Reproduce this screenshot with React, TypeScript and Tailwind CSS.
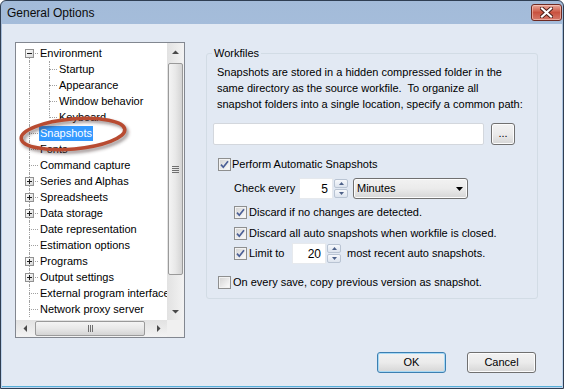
import React from "react";

type Item = { label: string; level: 0 | 1; exp?: "+" | "-"; selected?: boolean; last?: boolean };

const items: Item[] = [
  { label: "Environment", level: 0, exp: "-" },
  { label: "Startup", level: 1 },
  { label: "Appearance", level: 1 },
  { label: "Window behavior", level: 1 },
  { label: "Keyboard", level: 1, last: true },
  { label: "Snapshots", level: 0, selected: true },
  { label: "Fonts", level: 0 },
  { label: "Command capture", level: 0 },
  { label: "Series and Alphas", level: 0, exp: "+" },
  { label: "Spreadsheets", level: 0, exp: "+" },
  { label: "Data storage", level: 0, exp: "+" },
  { label: "Date representation", level: 0 },
  { label: "Estimation options", level: 0 },
  { label: "Programs", level: 0, exp: "+" },
  { label: "Output settings", level: 0, exp: "+" },
  { label: "External program interface", level: 0 },
  { label: "Network proxy server", level: 0 },
];

function Expander({ sign }: { sign: "+" | "-" }) {
  return (
    <span className="absolute left-[3px] top-[4px] flex h-[9px] w-[9px] items-center justify-center border border-[#919191] bg-gradient-to-br from-white to-[#d8d8d8]">
      <svg width="7" height="7" viewBox="0 0 7 7">
        <rect x="1" y="3" width="5" height="1" fill="#1e1e1e" />
        {sign === "+" && <rect x="3" y="1" width="1" height="5" fill="#1e1e1e" />}
      </svg>
    </span>
  );
}

function TreeRow({ item, first }: { item: Item; first: boolean }) {
  return (
    <div className="flex h-[16px] shrink-0 items-center whitespace-nowrap">
      <div className="relative h-full w-[16px] shrink-0">
        <span
          className={`absolute left-[7px] ${first ? "top-[8px]" : "top-0"} bottom-0 border-l border-dotted border-[#a0a0a0]`}
        />
        {item.level === 0 && (
          <span className="absolute left-[7px] right-0 top-[8px] border-t border-dotted border-[#a0a0a0]" />
        )}
        {item.exp && <Expander sign={item.exp} />}
      </div>
      {item.level === 1 && (
        <div className="relative h-full w-[19px] shrink-0">
          <span
            className={`absolute left-[11px] top-0 ${item.last ? "h-[9px]" : "bottom-0"} border-l border-dotted border-[#a0a0a0]`}
          />
          <span className="absolute left-[11px] right-0 top-[8px] border-t border-dotted border-[#a0a0a0]" />
        </div>
      )}
      <span
        className={`ml-[1px] flex h-[15px] items-center px-[1px] ${item.selected ? "bg-[#3399ff] text-white" : "text-black"}`}
      >
        {item.label}
      </span>
    </div>
  );
}

function Tri({ dir }: { dir: "up" | "down" | "left" | "right" }) {
  const pts: Record<string, string> = {
    up: "0,4 3.5,0.5 7,4",
    down: "0,0 3.5,3.5 7,0",
    left: "4,0 0.5,3.5 4,7",
    right: "0,0 3.5,3.5 0,7",
  };
  const vertical = dir === "up" || dir === "down";
  return (
    <svg width={vertical ? 7 : 4} height={vertical ? 4 : 7} viewBox={vertical ? "0 0 7 4" : "0 0 4 7"}>
      <polygon points={pts[dir]} fill="#4a4a4a" />
    </svg>
  );
}

function VScroll() {
  return (
    <div className="flex w-[17px] shrink-0 flex-col bg-gradient-to-r from-[#e2e2e2] to-[#f3f3f3]">
      <div className="flex h-[17px] shrink-0 items-center justify-center">
        <Tri dir="up" />
      </div>
      <div className="flex flex-1 flex-col px-[1px]">
        <div className="mt-[3px] flex h-[212px] items-center justify-center rounded-[2px] border border-[#9a9a9a] bg-gradient-to-r from-[#f4f4f4] via-[#e8e8e8] to-[#d4d4d4]">
          <div className="flex flex-col gap-[1px]">
            <span className="h-[1px] w-[7px] bg-[#6f6f6f]" />
            <span className="h-[1px] w-[7px] bg-[#6f6f6f]" />
            <span className="h-[1px] w-[7px] bg-[#6f6f6f]" />
            <span className="h-[1px] w-[7px] bg-[#6f6f6f]" />
          </div>
        </div>
      </div>
      <div className="flex h-[17px] shrink-0 items-center justify-center">
        <Tri dir="down" />
      </div>
    </div>
  );
}

function HScroll() {
  return (
    <div className="flex h-[17px] shrink-0">
      <div className="flex flex-1 bg-gradient-to-b from-[#e2e2e2] to-[#f3f3f3]">
        <div className="flex w-[17px] shrink-0 items-center justify-center">
          <Tri dir="left" />
        </div>
        <div className="flex flex-1 py-[1px]">
          <div className="ml-[2px] flex w-[110px] items-center justify-center rounded-[2px] border border-[#9a9a9a] bg-gradient-to-b from-[#f4f4f4] via-[#e8e8e8] to-[#d4d4d4]">
            <div className="flex gap-[1px]">
              <span className="h-[7px] w-[1px] bg-[#6f6f6f]" />
              <span className="h-[7px] w-[1px] bg-[#6f6f6f]" />
              <span className="h-[7px] w-[1px] bg-[#6f6f6f]" />
            </div>
          </div>
        </div>
        <div className="flex w-[17px] shrink-0 items-center justify-center">
          <Tri dir="right" />
        </div>
      </div>
      <div className="w-[17px] shrink-0 bg-[#f0f0f0]" />
    </div>
  );
}

function Check({ checked }: { checked: boolean }) {
  return (
    <span className="flex h-[13px] w-[13px] shrink-0 items-center justify-center border border-[#8e8f8f] bg-white">
      <span className="flex h-[11px] w-[11px] items-center justify-center border border-[#f2f2f2] bg-gradient-to-br from-[#d6d6d6] to-[#fafafa]">
        {checked && (
          <svg width="9" height="9" viewBox="0 0 9 9">
            <path d="M1 4.6 L3.3 7.2 L8 1.2" fill="none" stroke="#4b5f96" strokeWidth="1.7" />
          </svg>
        )}
      </span>
    </span>
  );
}

function SpinBtn({ dir }: { dir: "up" | "down" }) {
  return (
    <div className="flex flex-1 items-center justify-center rounded-[2px] border border-[#b9c4d3] bg-gradient-to-b from-[#f7f9fc] to-[#dde4ee]">
      <svg width="5" height="3" viewBox="0 0 5 3">
        <polygon points={dir === "up" ? "0,3 2.5,0 5,3" : "0,0 2.5,3 5,0"} fill="#4d6189" />
      </svg>
    </div>
  );
}

function Spinner({ value }: { value: string }) {
  return (
    <div className="flex h-[21px] items-stretch">
      <div className="flex w-[34px] items-center justify-end border border-[#e6e9ed] bg-white pr-[4px] text-[12px]">
        {value}
      </div>
      <div className="ml-[1px] flex w-[14px] flex-col gap-[1px] py-[1px]">
        <SpinBtn dir="up" />
        <SpinBtn dir="down" />
      </div>
    </div>
  );
}

function Button({ children, focused, className }: { children: React.ReactNode; focused?: boolean; className?: string }) {
  return (
    <div
      className={`flex items-center justify-center rounded-[3px] border ${
        focused ? "border-[#3c7fb1] shadow-[inset_0_0_0_1px_#a7d9f5]" : "border-[#707070] shadow-[inset_0_0_0_1px_#fcfcfc]"
      } bg-gradient-to-b from-[#f2f2f2] via-[#ebebeb] to-[#d6d6d6] ${className ?? ""}`}
    >
      {children}
    </div>
  );
}

function CloseBtn() {
  return (
    <div className="mt-[3px] flex h-[17px] w-[31px] items-center justify-center self-start rounded-[3px] border border-[#6e2a22] bg-gradient-to-b from-[#e8a89b] via-[#c9523f] to-[#d5786a] shadow-[inset_0_0_0_1px_rgba(255,220,210,0.5)]">
      <svg width="13" height="11" viewBox="0 0 13 11">
        <path d="M2 1.5 L11 9.5 M11 1.5 L2 9.5" stroke="#4a1d17" strokeWidth="4" strokeLinecap="square" />
        <path d="M2 1.5 L11 9.5 M11 1.5 L2 9.5" stroke="#ffffff" strokeWidth="2.2" strokeLinecap="square" />
      </svg>
    </div>
  );
}

export default function App() {
  return (
    <div className="h-[389px] w-[566px] bg-white font-['Liberation_Sans',Arial,sans-serif] text-[11px] text-black">
      <div className="flex h-[389px] w-[564px] flex-col rounded-t-[6px] border border-[#2f3e52] bg-gradient-to-b from-[#a3bbd9] to-[#bfd5ee]">
        <div className="flex h-[23px] shrink-0 items-center justify-between pl-[6px] pr-[1px]">
          <span className="mt-[1px] text-[12px] text-[#0b0b0b]">General Options</span>
          <CloseBtn />
        </div>
        <div className="mx-[1px] mb-[1px] flex flex-1 flex-col border-b border-[#55aed8] bg-[#e2e9f3] pl-[13px] pt-[18px]">
          <div className="flex items-start">
            <div className="relative flex h-[296px] w-[170px] shrink-0 flex-col border border-[#828790] bg-white">
              <div className="flex flex-1 overflow-hidden">
                <div className="flex flex-1 flex-col overflow-hidden pl-[6px] pt-[2px]">
                  {items.map((it, i) => (
                    <TreeRow key={it.label} item={it} first={i === 0} />
                  ))}
                </div>
                <VScroll />
              </div>
              <HScroll />
              <svg
                className="pointer-events-none absolute left-0 top-[70px] overflow-visible"
                width="125"
                height="45"
                viewBox="0 0 125 45"
              >
                <defs>
                  <filter id="blur" x="-20%" y="-50%" width="140%" height="200%">
                    <feGaussianBlur stdDeviation="1.5" />
                  </filter>
                </defs>
                <ellipse
                  cx="59"
                  cy="23.5"
                  rx="52"
                  ry="15"
                  transform="rotate(-5 59 23.5)"
                  fill="none"
                  stroke="rgba(60,40,40,0.45)"
                  strokeWidth="4"
                  filter="url(#blur)"
                />
                <ellipse
                  cx="57"
                  cy="21"
                  rx="52"
                  ry="15"
                  transform="rotate(-5 57 21)"
                  fill="none"
                  stroke="#b84b31"
                  strokeWidth="3.5"
                />
              </svg>
            </div>

            <div className="relative ml-[21px] mt-[11px] flex h-[246px] w-[332px] flex-col rounded-[3px] border border-[#d2dce5] pl-[10px] pt-[10px]">
              <span className="absolute -top-[8px] left-[5px] bg-[#e2e9f3] px-[2px] leading-[14px]">Workfiles</span>
              <p className="leading-[16px]">
                Snapshots are stored in a hidden compressed folder in the
                <br />
                same directory as the source workfile.&nbsp; To organize all
                <br />
                snapshot folders into a single location, specify a common path:
              </p>
              <div className="-ml-[4px] mt-[11px] flex items-center">
                <div className="h-[22px] w-[271px] rounded-[2px] border border-[#d3d7dd] bg-white" />
                <Button className="ml-[7px] h-[22px] w-[24px] pb-[2px] text-[11px]">...</Button>
              </div>
              <div className="ml-[1px] mt-[11px] flex h-[16px] items-center">
                <Check checked />
                <span className="ml-[1px]">Perform Automatic Snapshots</span>
              </div>
              <div className="ml-[17px] mt-[6px] flex h-[21px] items-center">
                <span className="w-[65px]">Check every</span>
                <Spinner value="5" />
                <div className="ml-[5px] flex h-[21px] w-[115px] items-center justify-between rounded-[3px] border border-[#707070] bg-gradient-to-b from-[#f2f2f2] via-[#ebebeb] to-[#d6d6d6] pl-[3px] pr-[4px] shadow-[inset_0_0_0_1px_#fcfcfc]">
                  <span>Minutes</span>
                  <svg width="7" height="4" viewBox="0 0 7 4">
                    <polygon points="0,0 3.5,4 7,0" fill="#000" />
                  </svg>
                </div>
              </div>
              <div className="ml-[17px] mt-[5px] flex h-[16px] items-center">
                <Check checked />
                <span className="ml-[2px]">Discard if no changes are detected.</span>
              </div>
              <div className="ml-[17px] mt-[5px] flex h-[16px] items-center">
                <Check checked />
                <span className="ml-[2px]">Discard all auto snapshots when workfile is closed.</span>
              </div>
              <div className="ml-[17px] mt-[2px] flex h-[21px] items-center">
                <Check checked />
                <span className="ml-[2px] w-[43px]">Limit to</span>
                <Spinner value="20" />
                <span className="ml-[6px]">most recent auto snapshots.</span>
              </div>
              <div className="ml-[1px] mt-[10px] flex h-[16px] items-center">
                <Check checked={false} />
                <span className="ml-[2px]">On every save, copy previous version as snapshot.</span>
              </div>
            </div>
          </div>
          <div className="mt-[14px] flex justify-end pr-[26px]">
            <Button focused className="h-[21px] w-[69px]">OK</Button>
            <Button className="ml-[21px] h-[21px] w-[69px]">Cancel</Button>
          </div>
        </div>
      </div>
    </div>
  );
}
